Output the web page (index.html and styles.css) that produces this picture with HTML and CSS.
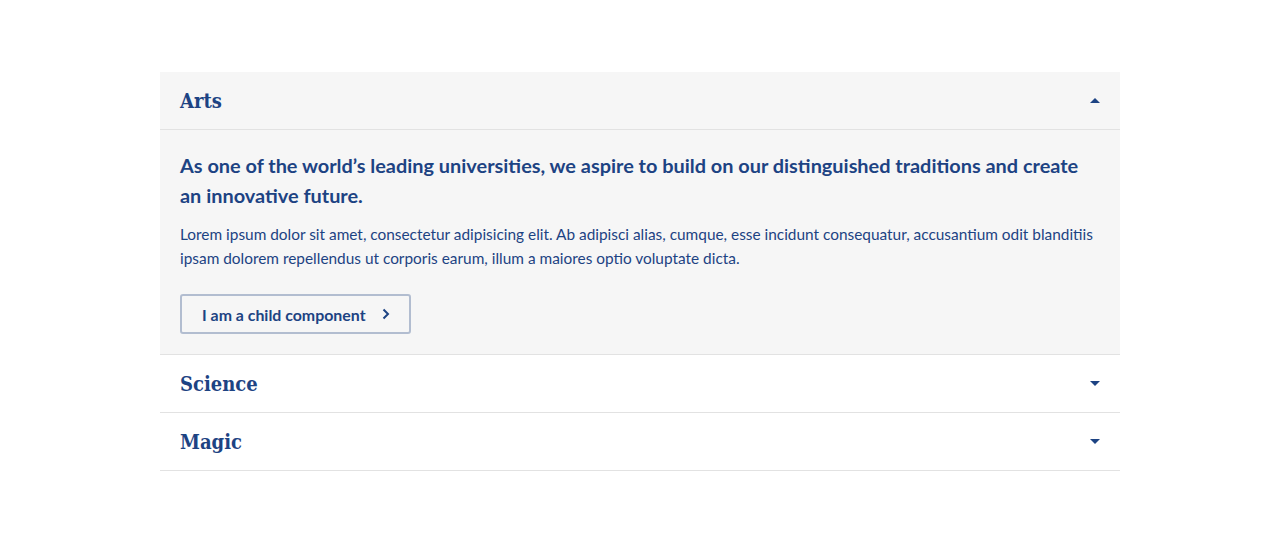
FILE: index.html
```html
<!DOCTYPE html>
<html>
<head>
<meta charset="utf-8">
<link rel="stylesheet" href="styles.css">
</head>
<body>
<div class="accordion">
  <div class="item open">
    <div class="header">
      <h2 class="title">Arts</h2>
      <svg class="caret" width="10" height="5" viewBox="0 0 10 5"><path d="M0 5 L5 0 L10 5 Z"/></svg>
    </div>
    <div class="body">
      <p class="lead">As one of the world’s leading universities, we aspire to build on our distinguished traditions and create an innovative future.</p>
      <p class="text">Lorem ipsum dolor sit amet, consectetur adipisicing elit. Ab adipisci alias, cumque, esse incidunt consequatur, accusantium odit blanditiis ipsam dolorem repellendus ut corporis earum, illum a maiores optio voluptate dicta.</p>
      <a class="btn" href="#">I am a child component
        <svg class="chev" width="8" height="12" viewBox="0 0 8 12"><path d="M1.5 1.5 L6 6 L1.5 10.5" fill="none" stroke="currentColor" stroke-width="2"/></svg>
      </a>
    </div>
  </div>
  <div class="item">
    <div class="header">
      <h2 class="title">Science</h2>
      <svg class="caret" width="10" height="5" viewBox="0 0 10 5"><path d="M0 0 L10 0 L5 5 Z"/></svg>
    </div>
  </div>
  <div class="item">
    <div class="header">
      <h2 class="title">Magic</h2>
      <svg class="caret" width="10" height="5" viewBox="0 0 10 5"><path d="M0 0 L10 0 L5 5 Z"/></svg>
    </div>
  </div>
</div>
</body>
</html>
```
FILE: styles.css
```css
html, body { margin: 0; padding: 0; background: #fff; }
body { font-family: Lato, "Open Sans", sans-serif; color: #1d4383; }
.accordion { width: 960px; margin: 72px auto 0; }
.item { border-bottom: 1px solid #e2e2e2; }
.item.open { background: #f6f6f6; }
.header { height: 57px; display: flex; align-items: center; justify-content: space-between; padding: 0 20px; }
.item.open .header { border-bottom: 1px solid #e2e2e2; }
.title { margin: 0; font-family: "DejaVu Serif Condensed", "DejaVu Serif", serif; font-weight: bold; font-size: 20px; color: #1d4383; }
.caret { fill: #1d4383; }
.body { padding: 20px 20px 20px; }
.lead { margin: 0 0 12px; font-size: 19.9px; font-weight: bold; line-height: 30px; }
.text { margin: 0 0 24px; font-size: 15.4px; line-height: 24px; }
.btn { display: inline-flex; align-items: center; gap: 16px; height: 40px; padding: 0 19px 0 20px; border: 2px solid #b2bdd0; border-radius: 3px; color: #1d4383; text-decoration: none; font-weight: bold; font-size: 15.9px; box-sizing: border-box; }
```
